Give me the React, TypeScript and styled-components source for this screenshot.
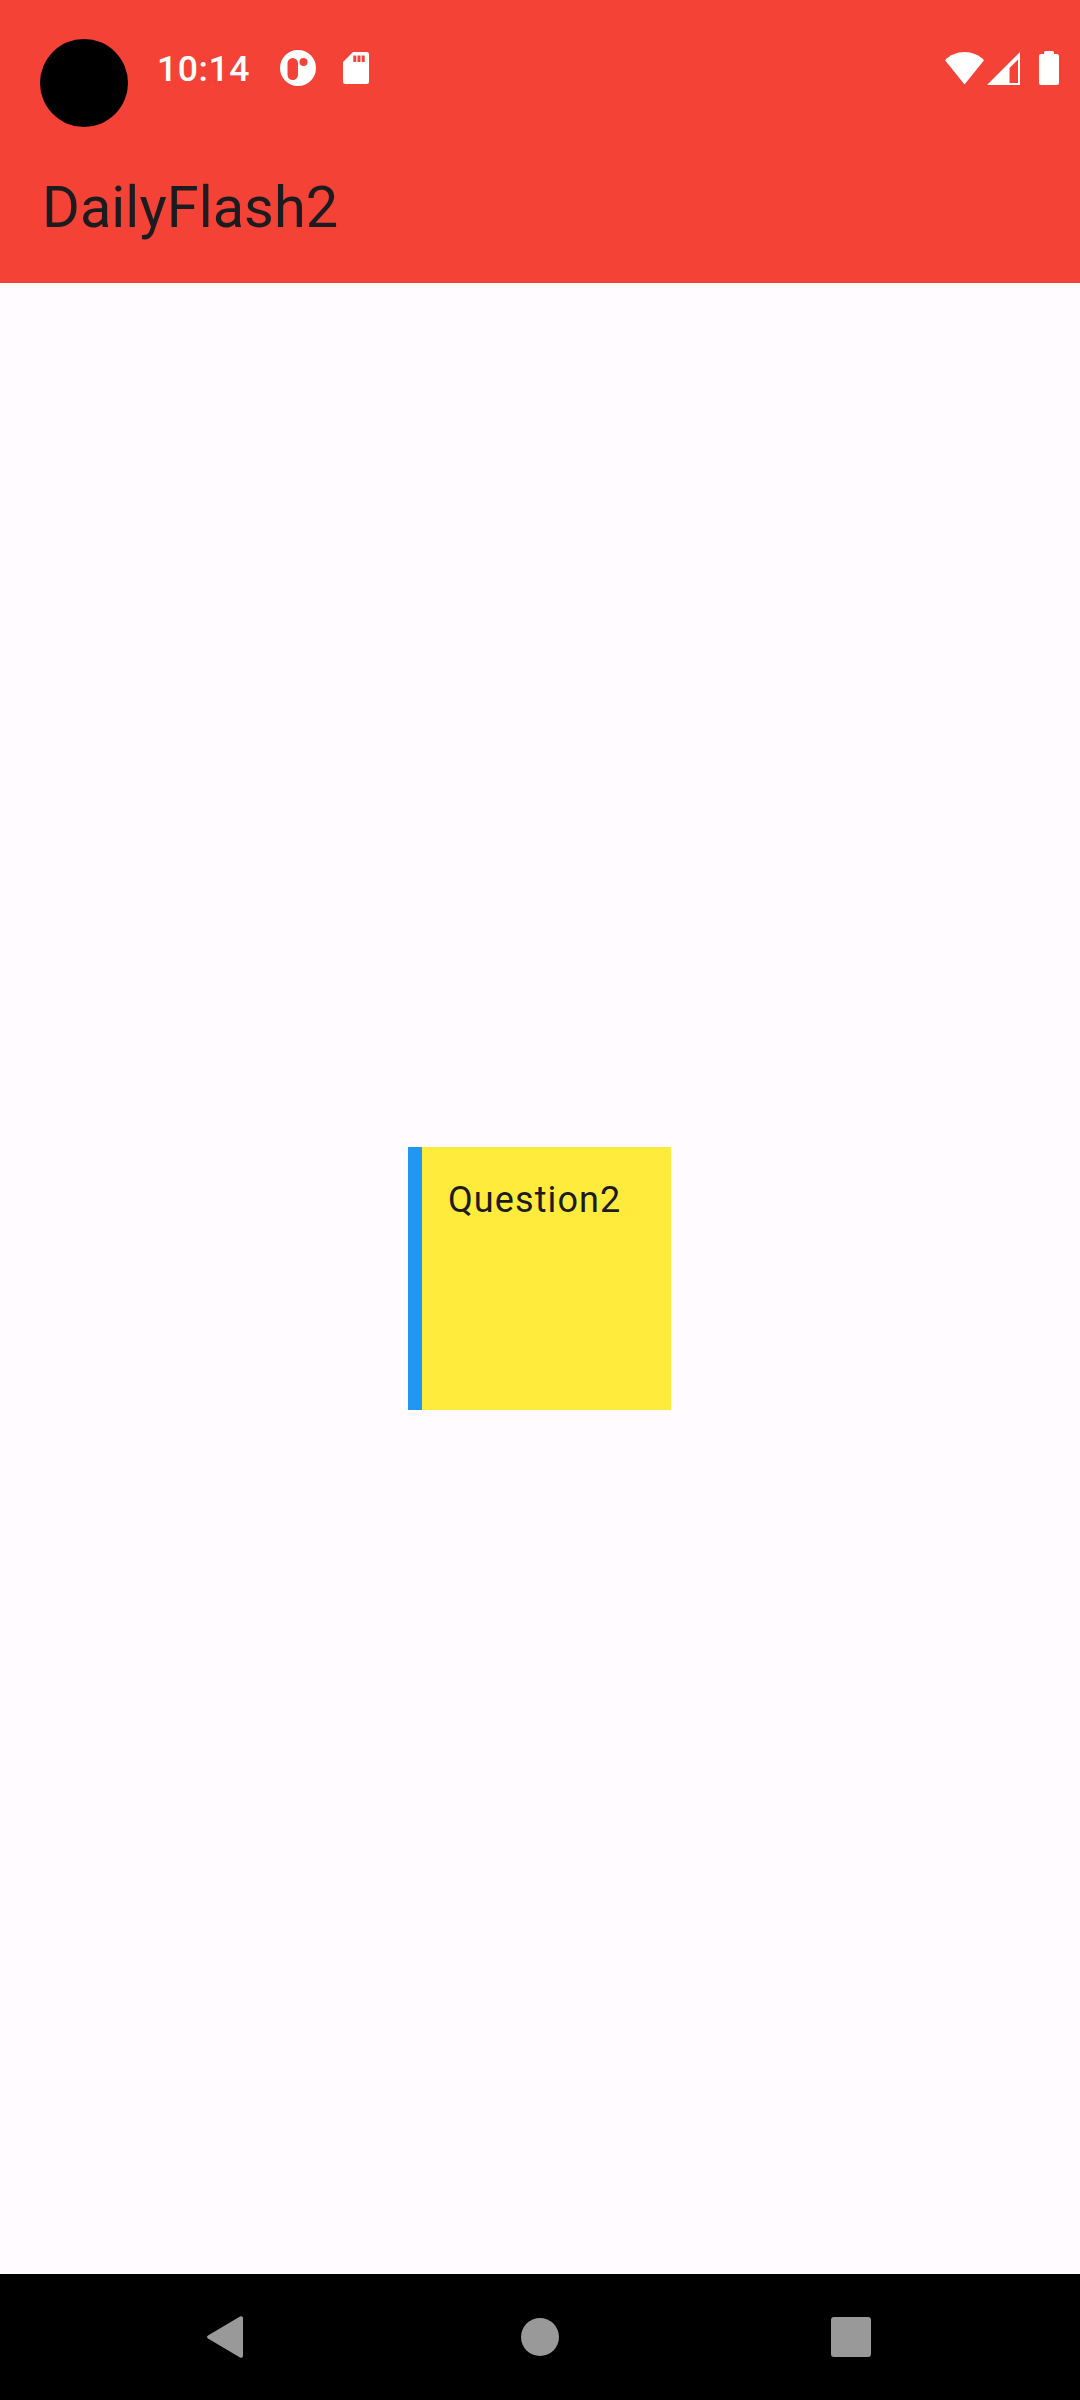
import React from "react";
import styled, { createGlobalStyle } from "styled-components";

const RED = "#f44336";

const Global = createGlobalStyle`
  html, body { margin: 0; padding: 0; background: #fffbfe; }
  #root { width: 1080px; height: 2400px; }
`;

const Screen = styled.div`
  position: relative;
  width: 1080px;
  height: 2400px;
  display: flex;
  flex-direction: column;
  background: #fffbfe;
  font-family: Roboto, "Liberation Sans", sans-serif;
  overflow: hidden;
`;

const AppBar = styled.header`
  height: 283px;
  flex: none;
  display: flex;
  flex-direction: column;
  background: ${RED};
  color: #1c1b1f;
`;

const CameraHole = styled.div`
  position: absolute;
  top: 39px;
  left: 40px;
  width: 88px;
  height: 88px;
  border-radius: 50%;
  background: #000;
`;

const StatusBar = styled.div`
  height: 36px;
  margin-top: 50px;
  padding: 0 21px 0 157px;
  display: flex;
  align-items: center;
  color: #fff;
`;

const Clock = styled.span`
  width: 123px;
  padding-top: 2px;
  font-size: 35.5px;
  font-weight: 500;
  line-height: 36px;
  letter-spacing: 0.6px;
`;

const Spacer = styled.div`
  flex: 1;
`;

const StatusIcon = styled.svg<{ $after?: number }>`
  display: block;
  flex: none;
  margin-right: ${(p) => p.$after ?? 0}px;
`;

const Title = styled.h1`
  margin: 0;
  padding: 87px 0 0 42px;
  font-size: 57.75px;
  font-weight: 400;
  line-height: 68px;
`;

const Main = styled.main`
  flex: 1;
  display: flex;
  align-items: center;
  justify-content: center;
`;

const Card = styled.section`
  width: 263px;
  height: 263px;
  margin: 0 1px 0 0;
  box-sizing: border-box;
  padding: 31px 0 0 26px;
  background: #ffeb3b;
  border-left: 14px solid #2196f3;
`;

const Question = styled.div`
  color: #1c1b1f;
  font-size: 36px;
  line-height: 44px;
  letter-spacing: 1.1px;
`;

const NavBar = styled.nav`
  height: 126px;
  flex: none;
  display: flex;
  align-items: center;
  padding: 0 0 0 207px;
  background: #000;
`;

const NavIcon = styled.svg<{ $after?: number }>`
  display: block;
  flex: none;
  margin-right: ${(p) => p.$after ?? 0}px;
  fill: #999;
`;

export default function App() {
  return (
    <Screen>
      <Global />
      <AppBar>
        <CameraHole />
        <StatusBar>
          <Clock>10:14</Clock>
          <StatusIcon $after={27} width="36" height="36" viewBox="0 0 36 36">
            <circle cx="18" cy="18" r="18" fill="#fff" />
            <rect x="7.5" y="8" width="10.5" height="22" rx="5.25" fill={RED} />
            <circle cx="23.5" cy="12" r="4" fill={RED} />
          </StatusIcon>
          <StatusIcon width="26" height="32" viewBox="0 0 26 32">
            <path
              fill="#fff"
              fillRule="evenodd"
              d="M10 0H23.5A2.5 2.5 0 0 1 26 2.5V29.5A2.5 2.5 0 0 1 23.5 32H2.5A2.5 2.5 0 0 1 0 29.5V10ZM10.3 3.5V10H13.3V3.5ZM14.5 3.5V10H17.5V3.5ZM18.7 3.5V10H21.7V3.5Z"
            />
          </StatusIcon>
          <Spacer />
          <StatusIcon $after={3} width="39" height="33" viewBox="0 0 39 33">
            <path fill="#fff" d="M0 8.2C5 3 12 0 19.5 0S34 3 39 8.2L19.5 32.5Z" />
          </StatusIcon>
          <StatusIcon $after={19} width="33" height="33" viewBox="0 0 33 33">
            <path
              fill="#fff"
              fillRule="evenodd"
              d="M0 33L33 0V33ZM22.5 16V31H31V7.5Z"
            />
          </StatusIcon>
          <StatusIcon width="20" height="34" viewBox="0 0 20 34">
            <path
              fill="#fff"
              d="M5 3V1.5A1.5 1.5 0 0 1 6.5 0H13.5A1.5 1.5 0 0 1 15 1.5V3H18A2 2 0 0 1 20 5V32A2 2 0 0 1 18 34H2A2 2 0 0 1 0 32V5A2 2 0 0 1 2 3Z"
            />
          </StatusIcon>
        </StatusBar>
        <Title>DailyFlash2</Title>
      </AppBar>
      <Main>
        <Card>
          <Question>Question2</Question>
        </Card>
      </Main>
      <NavBar>
        <NavIcon $after={278} width="36" height="42" viewBox="0 0 36 42">
          <path d="M1 19.5L33 .5C34.5-.2 36 .6 36 2V40C36 41.4 34.5 42.2 33 41.5L1 22.5C-.3 21.7-.3 20.3 1 19.5Z" />
        </NavIcon>
        <NavIcon $after={272} width="38" height="38" viewBox="0 0 38 38">
          <circle cx="19" cy="19" r="19" />
        </NavIcon>
        <NavIcon width="40" height="40" viewBox="0 0 40 40">
          <rect width="40" height="40" rx="3" />
        </NavIcon>
      </NavBar>
    </Screen>
  );
}
